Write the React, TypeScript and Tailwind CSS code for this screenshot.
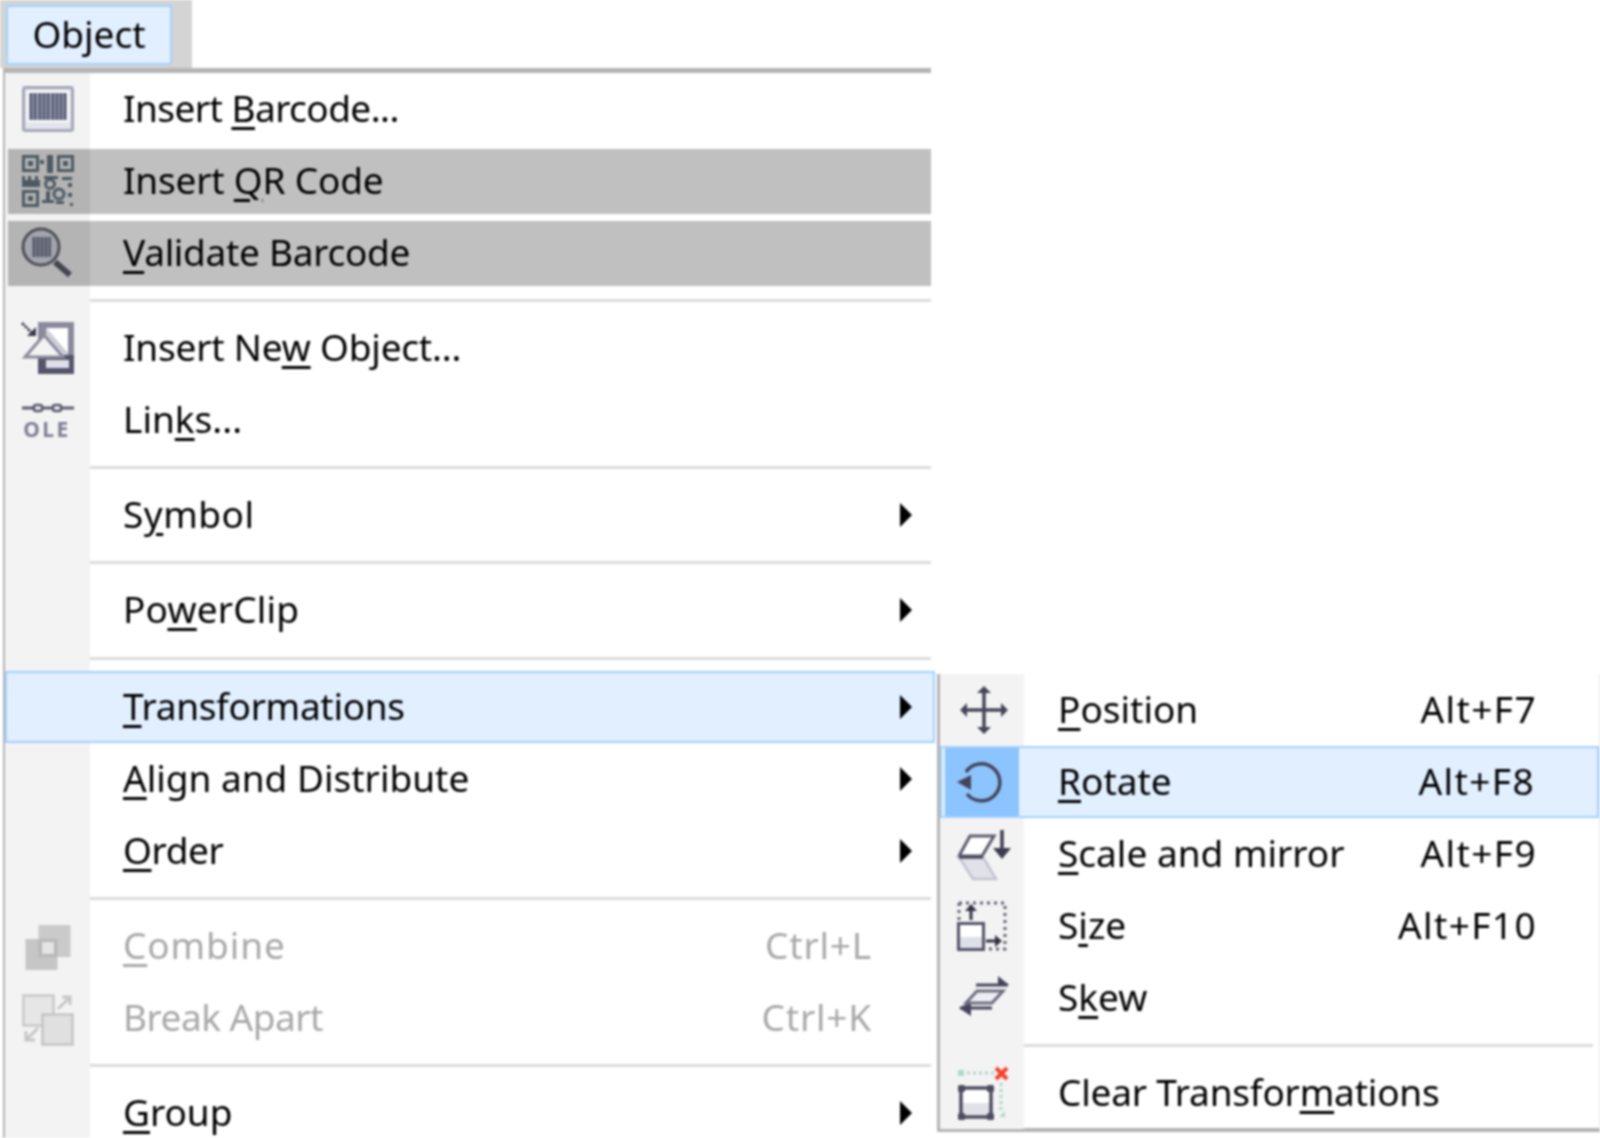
import type { ReactNode } from 'react';

// accelerator letter gets the thick underline
function Accel({ children }: { children: ReactNode }) {
  return <span className="underline decoration-[3px] underline-offset-[5px]">{children}</span>;
}

function BarcodeIcon() {
  return (
    <svg width="56" height="56" viewBox="0 0 56 56">
      <rect x="3.5" y="6.5" width="49" height="43" rx="2" fill="#e4e4ec" stroke="#a4a6b8" strokeWidth="3" />
      <rect x="7" y="10" width="42" height="31" fill="#fff" />
      <rect x="9" y="12" width="38" height="27" fill="#8d91a6" />
      <path d="M11 12v27M15 12v27M20 12v27M24 12v27M28 12v27M33 12v27M37 12v27M41 12v27M45 12v27" stroke="#555a72" strokeWidth="2" />
    </svg>
  );
}

function QrIcon() {
  return (
    <svg width="56" height="56" viewBox="0 0 56 56">
      <g fill="none" stroke="#4d5a62" strokeWidth="3">
        <rect x="3.5" y="3.5" width="14" height="14" />
        <rect x="38.5" y="3.5" width="14" height="14" />
        <rect x="3.5" y="38.5" width="14" height="14" />
        <circle cx="30" cy="31" r="4.5" />
        <circle cx="39" cy="41" r="5" />
      </g>
      <g fill="#4d5a62">
        <rect x="8" y="8" width="5" height="5" />
        <rect x="43" y="8" width="5" height="5" />
        <rect x="8" y="43" width="5" height="5" />
        <rect x="27" y="2" width="6" height="18" />
        <rect x="20" y="7" width="4" height="4" />
        <rect x="2" y="27" width="18" height="7" />
        <rect x="2" y="23" width="3" height="4" />
        <rect x="8" y="23" width="3" height="4" />
        <rect x="15" y="23" width="3" height="4" />
        <rect x="24" y="23" width="14" height="3" />
        <rect x="42" y="24" width="10" height="3" />
        <rect x="48" y="30" width="4" height="4" />
        <rect x="26" y="38" width="4" height="12" />
        <rect x="22" y="47" width="12" height="3" />
        <rect x="48" y="40" width="4" height="4" />
        <rect x="36" y="48" width="8" height="3" />
        <rect x="50" y="50" width="3" height="3" />
      </g>
    </svg>
  );
}

function ValidateIcon() {
  return (
    <svg width="56" height="56" viewBox="0 0 56 56">
      <circle cx="21" cy="22" r="18" fill="#a3a5ad" stroke="#4f5058" strokeWidth="3" />
      <rect x="12" y="12" width="19" height="20" fill="#777a8a" />
      <path d="M14 12v20M18 12v20M22 12v20M26 12v20M30 12v20" stroke="#565968" strokeWidth="2" />
      <path d="M35 37l15 13" stroke="#45464f" strokeWidth="6" />
    </svg>
  );
}

function NewObjectIcon() {
  return (
    <svg width="56" height="56" viewBox="0 0 56 56">
      <path d="M2 3l10 10" stroke="#3b3a4c" strokeWidth="2.5" strokeDasharray="3 1" />
      <path d="M7 16h9V7z" fill="#3b3a4c" />
      <rect x="18" y="2" width="36" height="52" fill="#8b8a9c" />
      <rect x="18" y="35" width="36" height="19" fill="#55546a" />
      <path d="M26 8h22v26z" fill="#fff" />
      <path d="M26 8v27h22z" fill="#cfcfdc" />
      <rect x="26" y="40" width="23" height="8" fill="#dfdfea" />
      <path d="M24 15L5 37h38z" fill="#f3f3f3" stroke="#8c8b9b" strokeWidth="3" />
    </svg>
  );
}

function OleIcon() {
  return (
    <svg width="56" height="56" viewBox="0 0 56 56">
      <path d="M2 16h52" stroke="#5b5a70" strokeWidth="3" />
      <rect x="14" y="13" width="8" height="6" rx="2" fill="#eee" stroke="#5b5a70" strokeWidth="2.5" />
      <rect x="33" y="13" width="8" height="6" rx="2" fill="#eee" stroke="#5b5a70" strokeWidth="2.5" />
      <text x="27" y="45" textAnchor="middle" fontFamily="Noto Sans" fontWeight="700" fontSize="21" letterSpacing="2.5" fill="#7f7f96">OLE</text>
    </svg>
  );
}

function CombineIcon() {
  return (
    <svg width="56" height="56" viewBox="0 0 56 56">
      <rect x="18.5" y="7" width="32" height="32" fill="#cacaca" />
      <rect x="5.5" y="21" width="32" height="31" fill="#c6c6c6" />
      <rect x="18.5" y="21" width="19" height="18" fill="#b8b8b8" />
      <rect x="22" y="24" width="12" height="12" fill="#e4e4e4" />
    </svg>
  );
}

function BreakApartIcon() {
  return (
    <svg width="56" height="56" viewBox="0 0 56 56">
      <rect x="3.5" y="5.5" width="30" height="30" fill="#e6e6e6" stroke="#c9c9c9" strokeWidth="2.5" />
      <rect x="22.5" y="24.5" width="30" height="30" fill="#e0e0e0" stroke="#c4c4c4" strokeWidth="2.5" />
      <path d="M38 19l11-11M42 7h8v8" fill="none" stroke="#c6c6c6" strokeWidth="3" />
      <path d="M18 38L7 49M6 41v9h9" fill="none" stroke="#c6c6c6" strokeWidth="3" />
    </svg>
  );
}

function MoveIcon() {
  return (
    <svg width="56" height="56" viewBox="0 0 56 56">
      <path d="M28 8v40M8 28h40" stroke="#454558" strokeWidth="3.5" />
      <path d="M28 4l-7 7h14zM28 52l-7-7h14zM4 28l7-7v14zM52 28l-7-7v14z" fill="#454558" />
    </svg>
  );
}

function RotateIcon() {
  return (
    <svg width="56" height="56" viewBox="0 0 56 56">
      <path d="M12 18A18.5 18.5 0 1 1 13 40" fill="none" stroke="#454558" strokeWidth="3.5" />
      <path d="M3 28L17 21v15z" fill="#454558" />
    </svg>
  );
}

function ScaleIcon() {
  return (
    <svg width="56" height="56" viewBox="0 0 56 56">
      <path d="M14 10h24L26 30H3z" fill="#fff" stroke="#5d5c70" strokeWidth="3" />
      <path d="M3 31h24l13 22H17z" fill="#e1e1ea" stroke="#c4c3d2" strokeWidth="2.5" />
      <path d="M3 31h24" stroke="#4c4b5e" strokeWidth="3.5" />
      <path d="M46 4v22" stroke="#3c3c4e" strokeWidth="3.5" />
      <path d="M37 22h18l-9 11z" fill="#3c3c4e" />
    </svg>
  );
}

function SizeIcon() {
  return (
    <svg width="56" height="56" viewBox="3 0 56 56">
      <path d="M6 5h46v46H28M6 5v18" fill="none" stroke="#636276" strokeWidth="3" strokeDasharray="3 4" />
      <rect x="5.5" y="25.5" width="25" height="26" fill="#fff" stroke="#555468" strokeWidth="3" />
      <rect x="7" y="39" width="22" height="11" fill="#dfdfea" />
      <path d="M18 22V11" stroke="#333345" strokeWidth="3" />
      <path d="M12 13h12l-6-7z" fill="#333345" />
      <path d="M33 43h10" stroke="#333345" strokeWidth="3" />
      <path d="M42 37v12l7-6z" fill="#333345" />
    </svg>
  );
}

function SkewIcon() {
  return (
    <svg width="56" height="56" viewBox="0 0 56 56">
      <path d="M20 15h32" stroke="#45445a" strokeWidth="3" />
      <path d="M42 6l11 9H42z" fill="#45445a" />
      <path d="M4 38h32" stroke="#45445a" strokeWidth="3" />
      <path d="M15 32L3 38l12 8z" fill="#45445a" />
      <path d="M21 21h26L36 33H10z" fill="#eeeef4" stroke="#6d6c80" strokeWidth="3" />
    </svg>
  );
}

function ClearIcon() {
  return (
    <svg width="56" height="56" viewBox="1 0 56 56">
      <rect x="3" y="5" width="6" height="6" fill="#b3d6cd" />
      <path d="M12 8h28M46 18v30" stroke="#b3d6cd" strokeWidth="3" strokeDasharray="3 3" />
      <path d="M44 52h6v-6z" fill="#b3d6cd" />
      <path d="M41 3l11 11M52 3L41 14" stroke="#f4432c" strokeWidth="4" />
      <rect x="7" y="24" width="28" height="27" fill="#fff" />
      <rect x="7" y="38" width="28" height="13" fill="#e1e1ea" />
      <rect x="6" y="23" width="30" height="29" fill="none" stroke="#4d4c60" strokeWidth="3.5" />
      <g fill="#4d4c60">
        <rect x="3" y="20" width="7" height="7" rx="1.5" />
        <rect x="32" y="20" width="7" height="7" rx="1.5" />
        <rect x="3" y="48" width="7" height="7" rx="1.5" />
        <rect x="32" y="48" width="7" height="7" rx="1.5" />
      </g>
    </svg>
  );
}

function Arrow() {
  return <span className="w-0 h-0 border-y-[12px] border-y-transparent border-l-[12px] border-l-black" />;
}

type RowProps = {
  icon?: ReactNode;
  children: ReactNode;
  shortcut?: string;
  submenu?: boolean;
  disabled?: boolean;
  variant?: 'gray' | 'active';
  fit?: string; // letter spacing, Noto runs a little off Segoe's widths
};

function MainRow({ icon, children, shortcut, submenu, disabled, variant, fit = '' }: RowProps) {
  if (variant === 'active') {
    return (
      <div className="h-[72px] flex items-center bg-[#e1efff] border-2 border-[#a4d0ff] w-[930px]">
        <div className="w-[116px] shrink-0" />
        <span className={`flex-1 pb-[4px] ${fit}`}>{children}</span>
        <span className="w-[54px] flex justify-center"><Arrow /></span>
      </div>
    );
  }
  if (variant === 'gray') {
    return (
      <div className="h-[72px] flex items-center">
        <div className="w-[85px] h-full shrink-0 flex items-center pl-[3px] bg-[#f3f3f3]">
          <div className="w-full h-[65px] flex justify-center items-center pr-[3px] bg-[#b4b4b4]">{icon}</div>
        </div>
        <div className="flex-1 h-[65px] flex items-center bg-[#c0c0c0] pl-[33px]">
          <span className={`pb-[4px] ${fit}`}>{children}</span>
        </div>
      </div>
    );
  }
  return (
    <div className={`h-[72px] flex items-center ${disabled ? 'text-[#a9a9a9]' : ''}`}>
      <div className="w-[85px] h-full shrink-0 flex justify-center items-center bg-[#f3f3f3]">{icon}</div>
      <span className={`flex-1 pl-[33px] pb-[4px] ${fit}`}>{children}</span>
      {shortcut && <span className="pr-[59px] pb-[4px] tracking-[0.8px]">{shortcut}</span>}
      {submenu && <span className="w-[50px] flex justify-center"><Arrow /></span>}
    </div>
  );
}

function SubRow({ icon, children, shortcut, variant, fit = '' }: RowProps) {
  const active = variant === 'active';
  return (
    <div className={`h-[72px] flex items-center ${active ? 'bg-[#e1efff] border-2 border-[#a4d0ff]' : ''}`}>
      {active ? (
        <div className="w-[74px] ml-[3px] h-full shrink-0 flex justify-center items-center bg-[#8cc4ff]">{icon}</div>
      ) : (
        <div className="w-[84px] h-full shrink-0 flex justify-center items-center pl-[3px] bg-[#f3f3f3]">{icon}</div>
      )}
      <span className={`flex-1 pb-[3px] ${active ? 'pl-[39px]' : 'pl-[34px]'} ${fit}`}>{children}</span>
      {shortcut && <span className="pr-[62px] pb-[3px] tracking-[1.4px]">{shortcut}</span>}
    </div>
  );
}

function Sep({ tall }: { tall?: boolean }) {
  return (
    <div className={`flex ${tall ? 'h-[25px]' : 'h-[23px]'}`}>
      <div className="w-[85px] bg-[#f3f3f3]" />
      <div className="flex-1 flex items-center"><div className="w-full h-[3px] bg-[#dcdcdc]" /></div>
    </div>
  );
}

export default function App() {
  return (
    <div className="relative w-[1600px] h-[1138px] overflow-hidden bg-white text-black text-[37px] leading-none font-['Noto_Sans',sans-serif] blur-[0.8px]">
      <div className="w-[192px] h-[68px] bg-[#d4d4d4] pt-[5px] pl-[6px]">
        <div className="w-[166px] h-[60px] pb-[3px] bg-[#e1efff] border-2 border-[#a4d0ff] flex items-center justify-center">Object</div>
      </div>

      <div className="ml-[3px] w-[928px] border-l-[2px] border-t-[5px] border-[#b4b4b4]">
        <MainRow icon={<BarcodeIcon />} fit="tracking-[-0.55px]">Insert <Accel>B</Accel>arcode...</MainRow>
        <MainRow icon={<QrIcon />} variant="gray" fit="tracking-[-0.2px]">Insert <Accel>Q</Accel>R Code</MainRow>
        <MainRow icon={<ValidateIcon />} variant="gray" fit="tracking-[-0.3px]"><Accel>V</Accel>alidate Barcode</MainRow>
        <Sep />
        <MainRow icon={<NewObjectIcon />} fit="tracking-[-0.2px]">Insert Ne<Accel>w</Accel> Object...</MainRow>
        <MainRow icon={<OleIcon />}>Lin<Accel>k</Accel>s...</MainRow>
        <Sep />
        <MainRow submenu fit="tracking-[0.5px]">S<Accel>y</Accel>mbol</MainRow>
        <Sep />
        <MainRow submenu fit="tracking-[0.2px]">Po<Accel>w</Accel>erClip</MainRow>
        <Sep tall />
        <MainRow variant="active" fit="tracking-[-0.3px]"><Accel>T</Accel>ransformations</MainRow>
        <MainRow submenu><Accel>A</Accel>lign and Distribute</MainRow>
        <MainRow submenu fit="tracking-[-0.4px]"><Accel>O</Accel>rder</MainRow>
        <Sep />
        <MainRow icon={<CombineIcon />} shortcut="Ctrl+L" disabled fit="tracking-[0.9px]"><Accel>C</Accel>ombine</MainRow>
        <MainRow icon={<BreakApartIcon />} shortcut="Ctrl+K" disabled fit="tracking-[-0.5px]">Break Apart</MainRow>
        <Sep />
        <MainRow submenu><Accel>G</Accel>roup</MainRow>
      </div>

      {/* flyout sits over the page, next to the open item */}
      <div className="absolute left-[937px] top-[674px] w-[663px] h-[458px] bg-white border-l-[3px] border-b-[4px] border-r border-l-[#b4b4b4] border-b-[#b4b4b4] border-r-[#e4e4e4]">
        <SubRow icon={<MoveIcon />} shortcut="Alt+F7"><Accel>P</Accel>osition</SubRow>
        <SubRow icon={<RotateIcon />} shortcut="Alt+F8" variant="active"><Accel>R</Accel>otate</SubRow>
        <SubRow icon={<ScaleIcon />} shortcut="Alt+F9"><Accel>S</Accel>cale and mirror</SubRow>
        <SubRow icon={<SizeIcon />} shortcut="Alt+F10">S<Accel>i</Accel>ze</SubRow>
        <SubRow icon={<SkewIcon />}>S<Accel>k</Accel>ew</SubRow>
        <div className="h-[23px] flex">
          <div className="w-[84px] bg-[#f3f3f3]" />
          <div className="flex-1 flex items-center pr-[6px]"><div className="w-full h-[3px] bg-[#dcdcdc]" /></div>
        </div>
        <SubRow icon={<ClearIcon />} fit="tracking-[-0.2px]">Clear Transfor<Accel>m</Accel>ations</SubRow>
      </div>
    </div>
  );
}
